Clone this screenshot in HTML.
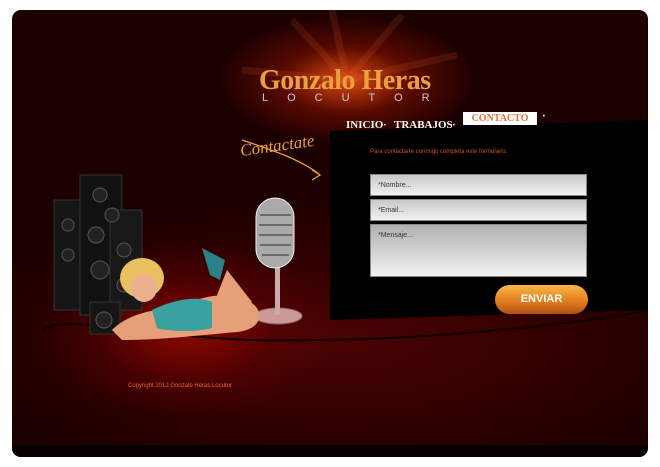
<!DOCTYPE html>
<html><head><meta charset="utf-8"><style>
body{margin:0;width:660px;height:467px;background:#fff;overflow:hidden;font-family:"Liberation Sans",sans-serif}
#f{position:absolute;left:12px;top:10px;width:636px;height:447px;border-radius:9px;overflow:hidden;
background:
radial-gradient(ellipse 150px 90px at 175px 320px,rgba(170,10,0,.75),rgba(110,0,0,.35) 60%,transparent 100%),
radial-gradient(ellipse 130px 65px at 335px 70px,rgba(240,80,20,.9),rgba(150,20,0,.5) 50%,transparent 100%),
radial-gradient(ellipse 400px 150px at 330px 330px,#4a0202,#2a0000 70%,#1c0000);}
#bot{position:absolute;left:0;top:435px;width:636px;height:12px;background:#080000}
.nav{position:absolute;top:109px;font-family:"Liberation Serif",serif;font-weight:bold;font-size:11px;color:#fff}
.in{position:absolute;left:358px;width:217px;background:linear-gradient(#c8c8c8,#f2f2f2);border:1px solid #888;font-size:7px;color:#333;box-sizing:border-box;padding:7px 0 0 7px}
</style></head><body>
<div id="f">
<svg width="636" height="447" style="position:absolute;left:0;top:0">
<g stroke="rgba(255,120,60,.12)" stroke-width="7"><line x1="335" y1="70" x2="280" y2="10"/><line x1="335" y1="70" x2="390" y2="5"/><line x1="335" y1="70" x2="230" y2="60"/><line x1="335" y1="70" x2="445" y2="45"/><line x1="335" y1="70" x2="320" y2="0"/></g>
<polygon points="318,121 636,110 636,300 318,310" fill="#000"/>
<path d="M30,320 C60,300 150,335 300,330 C420,330 600,310 636,300" stroke="#100" stroke-width="2" fill="none"/>
<path d="M230,130 C260,140 290,150 308,165" stroke="#e8a040" stroke-width="1.3" fill="none"/>
<path d="M300,160 L308,165 L300,170" stroke="#e8a040" stroke-width="1.3" fill="none"/>
<rect x="42" y="190" width="28" height="110" fill="#151515" stroke="#333"/>
<rect x="68" y="165" width="42" height="140" fill="#111" stroke="#333"/>
<rect x="98" y="200" width="32" height="100" fill="#181818" stroke="#333"/>
<rect x="78" y="292" width="30" height="32" fill="#151515" stroke="#333"/>
<g fill="#222" stroke="#555">
<circle cx="88" cy="185" r="7"/><circle cx="100" cy="205" r="7"/><circle cx="84" cy="225" r="8"/><circle cx="56" cy="215" r="6"/><circle cx="56" cy="245" r="6"/><circle cx="112" cy="240" r="7"/><circle cx="88" cy="260" r="9"/><circle cx="112" cy="275" r="7"/><circle cx="92" cy="310" r="8"/></g>
<ellipse cx="266" cy="306" rx="24" ry="8" fill="#c99" stroke="#866"/>
<rect x="263" y="255" width="5" height="50" fill="#caa"/>
<rect x="244" y="188" width="38" height="70" rx="19" fill="#aaa" stroke="#eee"/>
<g stroke="#555" stroke-width="1.5"><line x1="248" y1="205" x2="279" y2="205"/><line x1="247" y1="215" x2="280" y2="215"/><line x1="247" y1="225" x2="280" y2="225"/><line x1="248" y1="235" x2="279" y2="235"/><line x1="250" y1="245" x2="277" y2="245"/></g>
<path d="M100,320 C120,300 150,300 170,295 C195,285 215,282 235,290 C255,300 250,320 225,322 C190,325 150,330 110,330 Z" fill="#e6a079"/>
<path d="M140,300 C160,290 185,285 200,292 L200,318 C185,322 160,322 145,318 Z" fill="#3aa0a0"/>
<path d="M215,260 L205,285 L225,300 L240,292 Z" fill="#e6a079"/>
<path d="M190,238 L198,265 L208,270 L213,250 Z" fill="#2c8088"/>
<ellipse cx="130" cy="268" rx="22" ry="20" fill="#e8c060"/>
<ellipse cx="132" cy="278" rx="13" ry="14" fill="#eab090"/>
</svg>
<div style="position:absolute;left:247px;top:55px;font-family:'Liberation Serif',serif;font-weight:bold;font-size:28px;color:#e8a040;letter-spacing:-0.5px">Gonzalo Heras</div>
<div style="position:absolute;left:250px;top:82px;font-size:11px;letter-spacing:19px;color:#ccc">LOCUTOR</div>
<div class="nav" style="left:334px">INICIO</div>
<div class="nav" style="left:371px">·</div>
<div class="nav" style="left:382px">TRABAJOS</div>
<div class="nav" style="left:440px">·</div>
<div style="position:absolute;left:451px;top:102px;width:74px;height:13px;background:#fff;color:#e8703a;font-family:'Liberation Serif',serif;font-weight:bold;font-size:10px;text-align:center;line-height:13px">CONTACTO</div>
<div class="nav" style="left:530px;top:100px">·</div>
<div style="position:absolute;left:228px;top:126px;font-family:'Liberation Serif',serif;font-style:italic;font-size:17px;color:#e8a040;transform:rotate(-8deg)">Contactate</div>
<div style="position:absolute;left:358px;top:139px;font-size:6px;color:#d05020">Para contactarte conmigo completa este formulario.</div>
<div class="in" style="top:164px;height:22px">*Nombre...</div>
<div class="in" style="top:189px;height:22px">*Email...</div>
<div class="in" style="top:214px;height:53px;background:linear-gradient(#b0b0b0,#f2f2f2)">*Mensaje...</div>
<div style="position:absolute;left:483px;top:275px;width:93px;height:29px;border-radius:15px;background:linear-gradient(#f8b840,#e07820 60%,#b05010);color:#fff;font-weight:bold;font-size:11px;text-align:center;line-height:29px">ENVIAR</div>
<div style="position:absolute;left:116px;top:373px;font-size:6px;color:#f06020">Copyright 2012 Gonzalo Heras Locutor</div>
<div id="bot"></div>
</div>
</body></html>
